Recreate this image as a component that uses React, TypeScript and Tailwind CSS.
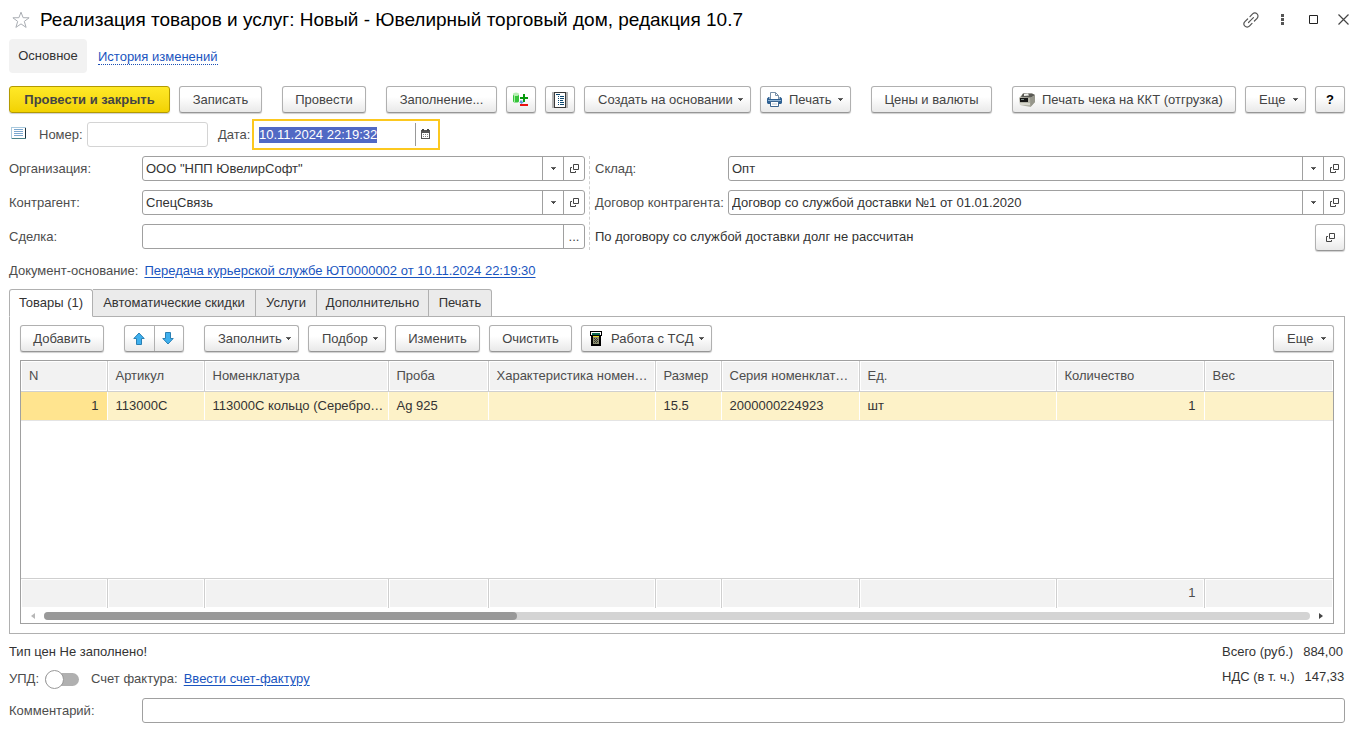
import { useEffect, useRef } from 'react';
import type { ReactNode } from 'react';

const buttonBase =
  'flex h-[27px] shrink-0 items-center whitespace-nowrap rounded-[3px] border border-[#b0b0b0] border-b-[#969696] bg-linear-to-b from-white from-40% to-[#e9e9e9] text-[#444] shadow-[0_1px_1px_#cfcfcf]';

function Caret() {
  return (
    <svg className="shrink-0" width="5" height="3" viewBox="0 0 5 3" aria-hidden="true">
      <path d="M0 0h5v1H0z" fill="#666" />
      <path d="M1 1h3v1H1zM2 2h1v1H2z" fill="#444" />
    </svg>
  );
}

function Button({ width, label, children }: { width: string; label?: string; children: ReactNode }) {
  return (
    <button type="button" aria-label={label} className={`${buttonBase} ${width} justify-center`}>
      {children}
    </button>
  );
}

function MenuButton({ width, icon, children }: { width: string; icon?: ReactNode; children: ReactNode }) {
  return (
    <button
      type="button"
      aria-haspopup="menu"
      className={`${buttonBase} ${width} justify-between pr-[7px] ${icon ? 'pl-[6px]' : 'pl-[13px]'}`}
    >
      <span className="flex items-center gap-[7px]">
        {icon}
        {children}
      </span>
      <Caret />
    </button>
  );
}

function OpenIcon() {
  return (
    <svg width="11" height="11" viewBox="0 0 11 11" fill="none" stroke="#444" aria-hidden="true">
      <path d="M4.5 1.5h5v5h-5z" />
      <path d="M3 4.5H1.5v5h5V8" />
    </svg>
  );
}

function StarIcon() {
  return (
    <svg width="18" height="18" viewBox="0 0 18 18" fill="none" stroke="#a9adb3" aria-hidden="true">
      <path d="M9 1.2l2.1 5.5 6 .1-4.8 3.6 1.8 6L9 12.9 3.9 16.4l1.8-6L.9 6.8l6-.1z" />
    </svg>
  );
}

function LinkIcon() {
  return (
    <svg width="16" height="16" viewBox="0 0 16 16" fill="none" stroke="#555" strokeWidth="1.2" strokeLinecap="round" aria-hidden="true">
      <path d="M7 4.6l2.6-2.7a3.1 3.1 0 0 1 4.5 4.4L11.4 9" />
      <path d="M9 11.4l-2.6 2.7a3.1 3.1 0 0 1-4.5-4.4L4.6 7" />
      <path d="M5.5 10.5l5-5" strokeDasharray="3 1" />
    </svg>
  );
}

function DocumentStateIcon() {
  return (
    <svg width="15" height="12" viewBox="0 0 15 12" aria-hidden="true">
      <path d="M0 0h15v12H0z" fill="#a9c9dd" />
      <path d="M1 1h13v10H1z" fill="#fff" />
      <path d="M14 1h1v11h-1z" fill="#1c2f3a" />
      <path d="M1 11h14v1H1z" fill="#4a8288" />
      <path d="M3 2.5h9M3 4.5h9M3 6.5h9M3 8.5h9" stroke="#7ba7cf" />
    </svg>
  );
}

function CalendarIcon() {
  return (
    <svg width="9" height="10" viewBox="0 0 9 10" aria-hidden="true">
      <path d="M0 1h9v9H0z" fill="#555" />
      <path d="M1 4h7v5H1z" fill="#fff" />
      <path d="M1 0h2v2H1zM6 0h2v2H6z" fill="#444" />
      <path d="M2 5h1v1H2zM4 5h1v1H4zM6 5h1v1H6zM2 7h1v1H2zM4 7h1v1H4zM6 7h1v1H6z" fill="#888" />
    </svg>
  );
}

function StockIcon() {
  return (
    <svg width="16" height="16" viewBox="0 0 16 16" aria-hidden="true">
      <path d="M0 2.5v6.5c0 1 1 1.5 3 1.5s3-.5 3-1.5V2.5z" fill="#35c43a" />
      <path d="M1 3h1v7H1z" fill="#a5efa3" />
      <ellipse cx="3" cy="2.2" rx="3" ry="1.8" fill="#b9efb6" />
      <path d="M10 2h2v3h3v2h-3v3h-2V7H7V5h3z" fill="#079a0c" />
      <path d="M7 8.5h2.5V10H11l-2.5 2L6 10h1z" fill="#5d9bd6" />
      <path d="M7 12h8v2H7z" fill="#ea1010" />
    </svg>
  );
}

function JournalIcon() {
  return (
    <svg width="16" height="16" viewBox="0 0 16 16" aria-hidden="true">
      <path d="M0 0h16v16H0z" fill="#b5b5b5" />
      <path d="M2 0h12v16H2z" fill="#3a3a3a" />
      <path d="M3 1h10v14H3z" fill="#fff" />
      <path
        d="M4 2.5h4M6 4.5h1M8 4.5h4M6 6.5h1M8 6.5h4M6 8.5h1M8 8.5h3M6 10.5h1M8 10.5h4M6 12.5h1M8 12.5h4"
        stroke="#0d4870"
      />
    </svg>
  );
}

function PrinterIcon() {
  return (
    <svg width="15" height="15" viewBox="0 0 15 15" aria-hidden="true">
      <path d="M3.5 7V.5h5l3 3V7" fill="#fff" stroke="#7890a8" />
      <path d="M8.5.5v3h3" fill="none" stroke="#7890a8" />
      <path d="M1.5 5h1v2h10V5h1L15 6.5V11l-1 1H1l-1-1V6.5z" fill="#2f6193" />
      <path d="M1 8h13v1H1z" fill="#8fb4d6" />
      <path d="M3.5 9.5h8v5h-8z" fill="#fff" stroke="#3c6590" />
      <path d="M5 12h5" stroke="#b8c4d0" />
    </svg>
  );
}

function CashRegisterIcon() {
  return (
    <svg width="16" height="14" viewBox="0 0 16 14" aria-hidden="true">
      <path d="M0 5l4-4.5h9l3 1.5v7l-4.5 5L1 12z" fill="#b4b4a8" />
      <path d="M4 .5h9l3 1.5-4 2.5L2 4z" fill="#5a5a55" />
      <path d="M5 1l4-.5 1 2-5 .5z" fill="#f0f0ec" />
      <path d="M11 5L16 2.5V9l-4.5 5z" fill="#96968b" />
      <path d="M1 5h8v4H1z" fill="#181818" />
      <path d="M2 6h3v1H2z" fill="#7d8c88" />
      <path d="M1 10h10v2H1z" fill="#d6d6cc" />
    </svg>
  );
}

function TerminalIcon() {
  return (
    <svg width="12" height="15" viewBox="0 0 12 15" aria-hidden="true">
      <path d="M0 0h12v5h-1v10H1V5H0z" fill="#000" />
      <path d="M1 1h10v1H1z" fill="#fff" />
      <path d="M2 2h8v2H2z" fill="#0b6b52" />
      <path d="M1 2h1v2H1zM10 2h1v2h-1z" fill="#fff" />
      <path d="M3 5h6v1H3z" fill="#e3dc28" />
      <path d="M3 6h6v7H3z" fill="#8c8f72" />
      <path d="M4 7h1v1H4zM6 7h1v1H6zM5 8h1v1H5zM7 8h1v1H7zM4 9h1v1H4zM6 9h1v1H6zM5 10h1v1H5zM7 10h1v1H7zM4 11h1v1H4zM6 11h1v1H6z" fill="#3a3c30" />
    </svg>
  );
}

function BlueArrow({ down }: { down?: boolean }) {
  return (
    <svg width="12" height="13" viewBox="0 0 12 13" aria-hidden="true">
      <path
        d={down ? 'M6 12L.8 6.5H3.5v-6h5v6h2.7z' : 'M6 1L.8 6.5H3.5v6h5v-6h2.7z'}
        fill="#3fb0ee"
        stroke="#2a80b4"
        strokeLinejoin="round"
      />
    </svg>
  );
}

function Field({ id, label, value, kind }: { id: string; label: string; value: string; kind: 'list' | 'dots' }) {
  return (
    <div className="flex items-center">
      <label htmlFor={id} className="w-[133px] shrink-0 whitespace-nowrap text-[#4d4d4d]">
        {label}
      </label>
      <div className="flex h-[25px] min-w-0 flex-1 rounded-[3px] border border-[#a0a0a0] bg-white">
        <input id={id} defaultValue={value} className="min-w-0 flex-1 bg-transparent px-[3px] text-[#333] outline-none" />
        {kind === 'list' ? (
          <>
            <button type="button" aria-label="Выбрать из списка" className="flex w-[21px] items-center justify-center border-l border-[#a0a0a0]">
              <Caret />
            </button>
            <button type="button" aria-label="Открыть" className="flex w-[21px] items-center justify-center border-l border-[#a0a0a0]">
              <OpenIcon />
            </button>
          </>
        ) : (
          <button type="button" aria-label="Выбрать" className="w-[21px] border-l border-[#a0a0a0] text-[#444]">
            ...
          </button>
        )}
      </div>
    </div>
  );
}

const columns = [
  { title: 'N', value: '1', width: 'w-[86px]', right: true },
  { title: 'Артикул', value: '113000С', width: 'w-[97px]' },
  { title: 'Номенклатура', value: '113000С кольцо (Серебро…', width: 'w-[184px]' },
  { title: 'Проба', value: 'Ag 925', width: 'w-[100px]' },
  { title: 'Характеристика номен…', value: '', width: 'w-[167px]' },
  { title: 'Размер', value: '15.5', width: 'w-[66px]' },
  { title: 'Серия номенклат…', value: '2000000224923', width: 'w-[138px]' },
  { title: 'Ед.', value: 'шт', width: 'w-[197px]' },
  { title: 'Количество', value: '1', width: 'w-[148px]', right: true, total: '1' },
  { title: 'Вес', value: '', width: '' },
];

const tabs = [
  { title: 'Товары (1)', width: 'w-[84px]' },
  { title: 'Автоматические скидки', width: 'w-[163px]' },
  { title: 'Услуги', width: 'w-[61px]' },
  { title: 'Дополнительно', width: 'w-[112px]' },
  { title: 'Печать', width: 'w-[63px]' },
];

function GoodsTable() {
  return (
    <div className="mt-2 border border-[#a0a0a0]">
      <table className="h-[247px] w-full table-fixed border-collapse">
        <thead>
          <tr className="h-[30px]">
            {columns.map((c) => (
              <th
                key={c.title}
                className={`${c.width} overflow-hidden border-r border-b border-[#cfcfcf] bg-[#f2f2f2] pl-2 text-left font-normal whitespace-nowrap text-[#4d4d4d] shadow-[inset_0_0_0_1px_white] last:border-r-0`}
              >
                {c.title}
              </th>
            ))}
          </tr>
        </thead>
        <tbody>
          <tr className="h-[29px]">
            {columns.map((c, i) => (
              <td
                key={c.title}
                className={`overflow-hidden border-r border-b border-r-white border-b-[#e4e4e4] pt-px pl-2 whitespace-nowrap text-[#333] last:border-r-0 ${
                  i === 0 ? 'bg-[#ffe48f]' : 'bg-[#fdf2c8]'
                } ${c.right ? 'pr-2 text-right' : ''}`}
              >
                {c.value}
              </td>
            ))}
          </tr>
          <tr>
            <td colSpan={columns.length} />
          </tr>
        </tbody>
        <tfoot>
          <tr className="h-[30px]">
            {columns.map((c) => (
              <td
                key={c.title}
                className="border-t border-r border-[#cfcfcf] bg-[#f2f2f2] px-2 text-right text-[#4d4d4d] shadow-[inset_0_0_0_1px_white] last:border-r-0"
              >
                {c.total}
              </td>
            ))}
          </tr>
        </tfoot>
      </table>
      <div className="flex h-[15px] items-center gap-[9px] px-[9px]">
        <svg width="5" height="6" viewBox="0 0 5 6" aria-hidden="true">
          <path d="M5 0v6L1 3z" fill="#b8b8b8" />
        </svg>
        <div className="h-2 flex-1 rounded-full bg-[#d4d4d4]">
          <div className="h-2 w-[37.4%] rounded-full bg-[#999]" />
        </div>
        <svg width="5" height="6" viewBox="0 0 5 6" aria-hidden="true">
          <path d="M0 0v6l4-3z" fill="#444" />
        </svg>
      </div>
    </div>
  );
}

export default function App() {
  const dateRef = useRef<HTMLInputElement>(null);

  useEffect(() => {
    dateRef.current?.focus();
    dateRef.current?.select();
  }, []);

  return (
    <div className="bg-white pr-3 pb-2 pl-[9px] font-['Liberation_Sans',Arial,sans-serif] text-[13px] leading-4 text-[#333] [&_input]:leading-4">
      <header className="mr-[-4px] flex h-[39px] items-center">
        <button type="button" aria-label="Добавить в избранное" className="ml-[3px]">
          <StarIcon />
        </button>
        <h1 className="ml-[10px] flex-1 text-[19px] leading-6 text-black">
          Реализация товаров и услуг: Новый - Ювелирный торговый дом, редакция 10.7
        </h1>
        <div className="flex items-center">
          <button type="button" aria-label="Получить ссылку" className="mr-[22px]">
            <LinkIcon />
          </button>
          <button type="button" aria-label="Меню" className="mr-[25px]">
            <svg width="3" height="11" viewBox="0 0 3 11" fill="#555" aria-hidden="true">
              <path d="M0 0h3v3H0zM0 4h3v3H0zM0 8h3v3H0z" />
            </svg>
          </button>
          <button type="button" aria-label="Развернуть" className="mr-[19px]">
            <svg width="10" height="10" viewBox="0 0 10 10" fill="none" stroke="#222" aria-hidden="true">
              <path d="M.5.5h8v8h-8z" />
            </svg>
          </button>
          <button type="button" aria-label="Закрыть">
            <svg width="11" height="11" viewBox="0 0 11 11" stroke="#444" strokeWidth="1.2" aria-hidden="true">
              <path d="M.5.5l10 10M10.5.5l-10 10" />
            </svg>
          </button>
        </div>
      </header>

      <nav className="flex h-[34px] items-center gap-[11px]">
        <span className="flex h-[34px] w-[78px] items-center justify-center rounded-[4px] bg-[#f2f2f2]">Основное</span>
        <a href="#history" className="border-b border-dotted border-[#1a4fb5] pt-[2px] leading-[14px] text-[#1a55c0]">
          История изменений
        </a>
      </nav>

      <div className="mt-[13px] flex gap-[9px]">
        <button
          type="button"
          className="h-[27px] w-[161px] shrink-0 rounded-[3px] border border-[#b39a00] bg-linear-to-b from-[#ffe926] to-[#f2d200] font-bold whitespace-nowrap text-[#444] shadow-[0_1px_1px_#cfcfcf]"
        >
          Провести и закрыть
        </button>
        <Button width="w-[83px] mr-[11px]">Записать</Button>
        <Button width="w-[84px] mr-[11px]">Провести</Button>
        <Button width="w-[111px]">Заполнение...</Button>
        <Button width="w-[30px]" label="Остатки">
          <StockIcon />
        </Button>
        <Button width="w-[30px]" label="Журнал">
          <JournalIcon />
        </Button>
        <MenuButton width="w-[167px]">Создать на основании</MenuButton>
        <MenuButton width="w-[91px] mr-[11px]" icon={<PrinterIcon />}>
          Печать
        </MenuButton>
        <Button width="w-[121px] mr-[11px]">Цены и валюты</Button>
        <button type="button" className={`${buttonBase} w-[224px] gap-[7px] pl-[6px]`}>
          <CashRegisterIcon />
          Печать чека на ККТ (отгрузка)
        </button>
        <div className="ml-auto flex gap-[9px]">
          <MenuButton width="w-[61px]">Еще</MenuButton>
          <Button width="w-[30px]">
            <span className="font-bold text-black">?</span>
          </Button>
        </div>
      </div>

      <div className="mt-[6px] flex h-[31px] items-center text-[#4d4d4d]">
        <span className="mr-[13px] ml-[2px] pb-1">
          <DocumentStateIcon />
        </span>
        <label htmlFor="number" className="w-[48px]">
          Номер:
        </label>
        <input id="number" className="h-[25px] w-[121px] rounded-[3px] border border-[#d4d4d4] px-1 outline-none" />
        <label htmlFor="date" className="ml-[10px] w-[34px]">
          Дата:
        </label>
        <div className="flex h-[31px] w-[188px] items-center border-2 border-[#fcc81f]">
          <input
            id="date"
            ref={dateRef}
            defaultValue="10.11.2024 22:19:32"
            className="min-w-0 flex-1 pl-[5px] text-[#333] outline-none selection:bg-[#5169c4] selection:text-white"
          />
          <button type="button" aria-label="Выбрать дату" className="flex h-[23px] w-[23px] items-center border-l border-[#999] pb-[2px] pl-[5px]">
            <CalendarIcon />
          </button>
        </div>
      </div>

      <div className="mt-[6px] grid grid-cols-[576fr_756fr] gap-x-1">
        <div className="flex flex-col gap-[9px]">
          <Field id="org" label="Организация:" value={'ООО "НПП ЮвелирСофт"'} kind="list" />
          <Field id="partner" label="Контрагент:" value="СпецСвязь" kind="list" />
          <Field id="deal" label="Сделка:" value="" kind="dots" />
        </div>
        <div className="flex flex-col gap-[9px] border-l border-dashed border-[#d0d0d0] pl-[5px]">
          <Field id="store" label="Склад:" value="Опт" kind="list" />
          <Field id="contract" label="Договор контрагента:" value="Договор со службой доставки №1 от 01.01.2020" kind="list" />
          <div className="flex h-[26px] items-center justify-between">
            <span>По договору со службой доставки долг не рассчитан</span>
            <Button width="w-[30px]" label="Открыть расчеты">
              <OpenIcon />
            </Button>
          </div>
        </div>
      </div>

      <div className="mt-[13px] flex gap-[6px] text-[#4d4d4d]">
        <span>Документ-основание:</span>
        <a href="#base" className="text-[#1a55c0] underline underline-offset-2">
          Передача курьерской службе ЮТ0000002 от 10.11.2024 22:19:30
        </a>
      </div>

      <div role="tablist" className="-mb-px mt-[10px] flex">
        {tabs.map((t, i) => (
          <button
            key={t.title}
            type="button"
            role="tab"
            aria-selected={i === 0}
            className={`${t.width} h-[28px] border-t border-r border-b border-[#b0b0b0] whitespace-nowrap first:border-l last:rounded-tr-[3px] ${
              i === 0 ? 'z-10 rounded-t-[3px] border-b-white bg-white' : 'bg-[#ebebeb]'
            }`}
          >
            {t.title}
          </button>
        ))}
      </div>

      <section className="border border-[#b0b0b0] px-[10px] pt-[8px] pb-[9px]">
        <div className="flex gap-[9px]">
          <Button width="w-[84px] mr-[11px]">Добавить</Button>
          <div className={`${buttonBase} mr-[11px] w-[60px]`}>
            <button type="button" aria-label="Переместить вверх" className="flex h-full w-[30px] items-center justify-center border-r border-[#b0b0b0] pr-[2px]">
              <BlueArrow />
            </button>
            <button type="button" aria-label="Переместить вниз" className="flex h-full flex-1 items-center justify-center pr-[2px]">
              <BlueArrow down />
            </button>
          </div>
          <MenuButton width="w-[95px]">Заполнить</MenuButton>
          <MenuButton width="w-[78px]">Подбор</MenuButton>
          <Button width="w-[85px]">Изменить</Button>
          <Button width="w-[83px]">Очистить</Button>
          <MenuButton width="w-[131px]" icon={<span className="px-[2px]"><TerminalIcon /></span>}>
            Работа с ТСД
          </MenuButton>
          <div className="ml-auto">
            <MenuButton width="w-[61px]">Еще</MenuButton>
          </div>
        </div>
        <GoodsTable />
      </section>

      <div className="mt-[10px] flex justify-between">
        <div>
          <div>Тип цен Не заполнено!</div>
          <div className="mt-[9px] flex h-5 items-center text-[#4d4d4d]">
            <label htmlFor="upd">УПД:</label>
            <input
              id="upd"
              type="checkbox"
              role="switch"
              className="mx-[6px] flex h-[13px] w-[34px] appearance-none items-center rounded-full bg-[#b0b0b0] before:size-[19px] before:shrink-0 before:rounded-full before:border before:border-[#999] before:bg-white checked:justify-end"
            />
            <span className="ml-[6px]">Счет фактура:</span>
            <a href="#invoice" className="ml-[6px] text-[#1a55c0] underline underline-offset-2">
              Ввести счет-фактуру
            </a>
          </div>
        </div>
        <div className="flex w-[123px] flex-col gap-[9px] whitespace-nowrap">
          <div className="flex gap-[10px]">
            <span>Всего (руб.)</span>
            <span>884,00</span>
          </div>
          <div className="flex gap-[10px]">
            <span>НДС (в т. ч.)</span>
            <span>147,33</span>
          </div>
        </div>
      </div>

      <div className="mt-[9px] flex items-center">
        <label htmlFor="comment" className="w-[133px] shrink-0 text-[#4d4d4d]">
          Комментарий:
        </label>
        <input id="comment" className="h-[25px] min-w-0 flex-1 rounded-[3px] border border-[#a0a0a0] px-1 outline-none" />
      </div>
    </div>
  );
}
